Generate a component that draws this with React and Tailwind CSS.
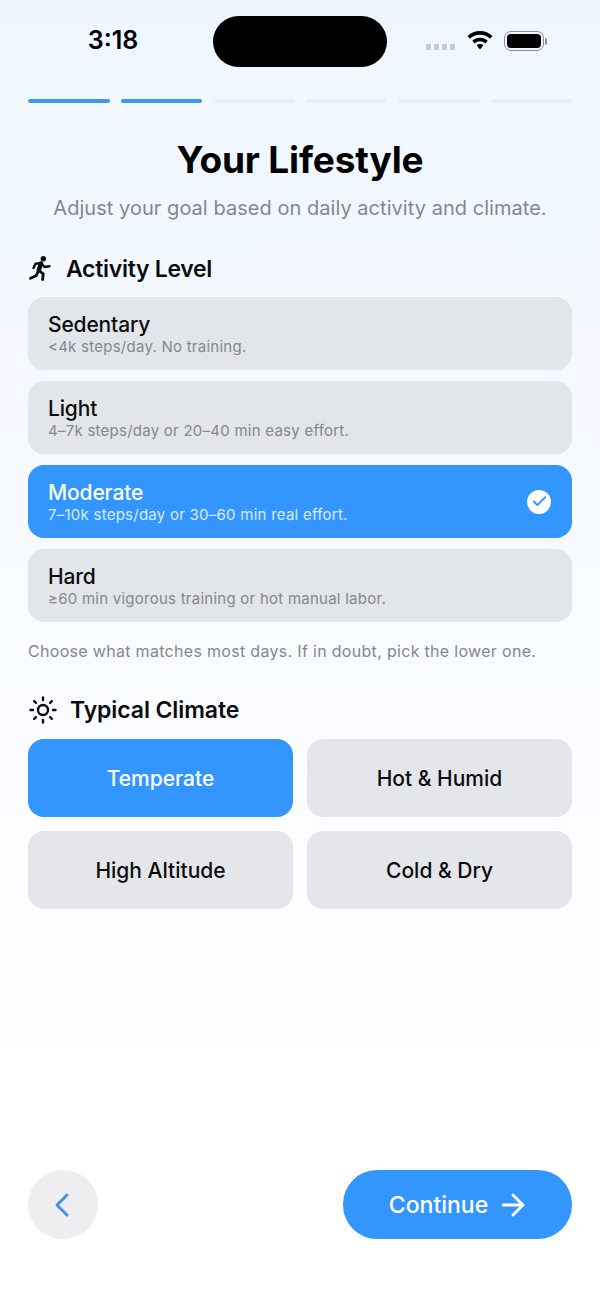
import { ArrowRight, Check, ChevronLeft, Sun } from "lucide-react";

const levels = [
  { name: "Sedentary", desc: "<4k steps/day. No training." },
  { name: "Light", desc: "4–7k steps/day or 20–40 min easy effort." },
  { name: "Moderate", desc: "7–10k steps/day or 30–60 min real effort.", active: true },
  { name: "Hard", desc: "≥60 min vigorous training or hot manual labor." },
];

const climates = [
  { name: "Temperate", active: true },
  { name: "Hot & Humid" },
  { name: "High Altitude" },
  { name: "Cold & Dry" },
];

function RunIcon() {
  return (
    <svg className="-ml-[2px]" width="32" height="32" viewBox="0 0 32 32" fill="none" stroke="#0c0c0e" strokeLinecap="round" strokeLinejoin="round">
      <circle cx="17.3" cy="5.7" r="2.700" fill="#0c0c0e" stroke="none" />
      <path d="M15 10.500 L12.800 17" strokeWidth="4.600" />
      <path d="M15 10 L9.500 10.800 L7.500 15" strokeWidth="2.400" />
      <path d="M15.500 10.500 L18.500 14 L23.500 13.200" strokeWidth="2.400" />
      <path d="M12.800 17.500 L17.200 20.800 L16.600 26.500" strokeWidth="2.800" />
      <path d="M12.500 18 L10 22.800 L4.500 25.300" strokeWidth="2.800" />
    </svg>
  );
}

function StatusBar() {
  return (
    <div className="flex h-[99px] items-start">
      <div className="flex h-[52px] w-[213px] mt-[15px] items-center justify-center pl-[13px]">
        <span className="text-[25px] font-semibold text-black">3:18</span>
      </div>
      <div className="mt-[16px] h-[51px] w-[174px] rounded-full bg-black"></div>
      <div className="flex mt-[31px] items-start pl-[39px]">
        <div className="mt-[13px] flex gap-[3px]">
          <div className="h-[6px] w-[5px] rounded-[1px] bg-[#c8cbd0]"></div>
          <div className="h-[6px] w-[5px] rounded-[1px] bg-[#c8cbd0]"></div>
          <div className="h-[6px] w-[5px] rounded-[1px] bg-[#c8cbd0]"></div>
          <div className="h-[6px] w-[5px] rounded-[1px] bg-[#c8cbd0]"></div>
        </div>
        <svg className="ml-[12px]" width="26" height="19" viewBox="0 0 26 19" fill="black">
          <path d="M13 0C8.200 0 3.800 1.900 0.500 5L3 7.700C5.600 5.200 9.100 3.700 13 3.700s7.400 1.500 10 4L25.500 5C22.200 1.900 17.800 0 13 0z" />
          <path d="M13 6.700c-3 0-5.700 1.200-7.700 3.100l2.500 2.600c1.400-1.300 3.200-2.100 5.200-2.100s3.800 0.800 5.200 2.100l2.500-2.600c-2-1.900-4.700-3.100-7.700-3.100z" />
          <path d="M13 13.100c-1.300 0-2.500 0.500-3.300 1.300L13 18.500l3.300-4.100c-0.800-0.800-2-1.300-3.300-1.300z" />
        </svg>
        <div className="ml-[11px] flex items-center">
          <div className="flex h-[20px] w-[40px] items-center justify-center rounded-[7px] border-[1.5px] border-[#8b8d92]">
            <div className="h-[14px] w-[34px] rounded-[4px] bg-black"></div>
          </div>
          <div className="ml-[1px] h-[7px] w-[2px] rounded-r-sm bg-[#8b8d92]"></div>
        </div>
      </div>
    </div>
  );
}

function Progress() {
  return (
    <div className="flex gap-[11px]">
      <div className="h-1 flex-1 rounded-full bg-[#3e97f2]"></div>
      <div className="h-1 flex-1 rounded-full bg-[#3e97f2]"></div>
      <div className="h-1 flex-1 rounded-full bg-[#eaeff6]"></div>
      <div className="h-1 flex-1 rounded-full bg-[#eaeff6]"></div>
      <div className="h-1 flex-1 rounded-full bg-[#eaeff6]"></div>
      <div className="h-1 flex-1 rounded-full bg-[#eaeff6]"></div>
    </div>
  );
}

function LevelCard({ level }) {
  return (
    <div
      className={
        level.active
          ? "flex h-[73px] items-center justify-between rounded-2xl bg-[#3396ff] pl-5 pr-[21px]"
          : "flex h-[73px] items-center justify-between rounded-2xl bg-[#e2e5ea] pl-5 pr-[21px]"
      }
    >
      <div className="pt-[2px]">
        <div className={level.active ? "text-[21px] leading-[24px] font-medium tracking-[-0.15px] text-white" : "text-[21px] leading-[24px] font-medium tracking-[-0.15px] text-[#0c0c0e]"}>
          {level.name}
        </div>
        <div className={level.active ? "text-[15px] leading-[20px] tracking-[0.25px] text-white/80" : "text-[15px] leading-[20px] tracking-[0.25px] text-[#85878c]"}>
          {level.desc}
        </div>
      </div>
      {level.active && (
        <div className="flex h-6 w-6 items-center justify-center rounded-full bg-white">
          <Check className="h-[17px] w-[17px] text-[#3396ff]" strokeWidth={2.6} />
        </div>
      )}
    </div>
  );
}

export default function App() {
  return (
    <div
      className="flex h-[1298px] w-[600px] flex-col bg-gradient-to-b from-[#eff6ff] to-white to-85% px-7"
      style={{ fontFamily: "Inter, 'Noto Sans', sans-serif" }}
    >
      <div className="-mx-7">
        <StatusBar />
      </div>
      <Progress />

      <h1 className="mt-[34px] text-center text-[37px] leading-[46px] font-bold tracking-[-0.15px] text-black">
        Your Lifestyle
      </h1>
      <p className="mt-[11px] text-center text-[20px] leading-[28px] tracking-[0.04px] text-[#85878c]">
        Adjust your goal based on daily activity and climate.
      </p>

      <div className="mt-[32px] flex h-[30px] items-center gap-[8px]">
        <RunIcon />
        <h2 className="text-[23px] font-semibold tracking-[-0.3px] text-[#0c0c0e]">Activity Level</h2>
      </div>

      <div className="mt-[13px] flex flex-col gap-[11px]">
        {levels.map((level) => (
          <LevelCard key={level.name} level={level} />
        ))}
      </div>

      <p className="mt-[19px] text-[16px] leading-[20px] tracking-[0.31px] text-[#85878c]">
        Choose what matches most days. If in doubt, pick the lower one.
      </p>

      <div className="mt-[34px] flex h-[30px] items-center gap-[12px]">
        <Sun className="h-[30px] w-[30px] text-[#0c0c0e]" strokeWidth={1.9} />
        <h2 className="pt-[1px] text-[23px] font-semibold tracking-[-0.1px] text-[#0c0c0e]">Typical Climate</h2>
      </div>

      <div className="mt-[14px] grid grid-cols-2 gap-[14px]">
        {climates.map((c) => (
          <div
            key={c.name}
            className={
              c.active
                ? "flex h-[78px] items-center justify-center rounded-2xl bg-[#3396ff] pt-[1px] text-[21px] font-medium text-white"
                : "flex h-[78px] items-center justify-center rounded-2xl bg-[#e5e6ea] pt-[1px] text-[21px] font-medium text-[#0c0c0e]"
            }
          >
            {c.name}
          </div>
        ))}
      </div>

      <div className="mt-auto mb-[59px] flex items-center justify-between">
        <button className="flex h-[69px] w-[70px] items-center justify-center rounded-full bg-[#eeeef1]">
          <ChevronLeft className="mr-[3px] h-10 w-10 text-[#3e92ec]" strokeWidth={1.7} />
        </button>
        <button className="flex h-[69px] w-[229px] items-center justify-center gap-[8px] rounded-[34px] bg-[#3396ff] pl-[4px] text-[23px] font-medium text-white">
          <span className="pt-[2px]">Continue</span>
          <ArrowRight className="h-[34px] w-[34px]" strokeWidth={2} />
        </button>
      </div>
    </div>
  );
}
